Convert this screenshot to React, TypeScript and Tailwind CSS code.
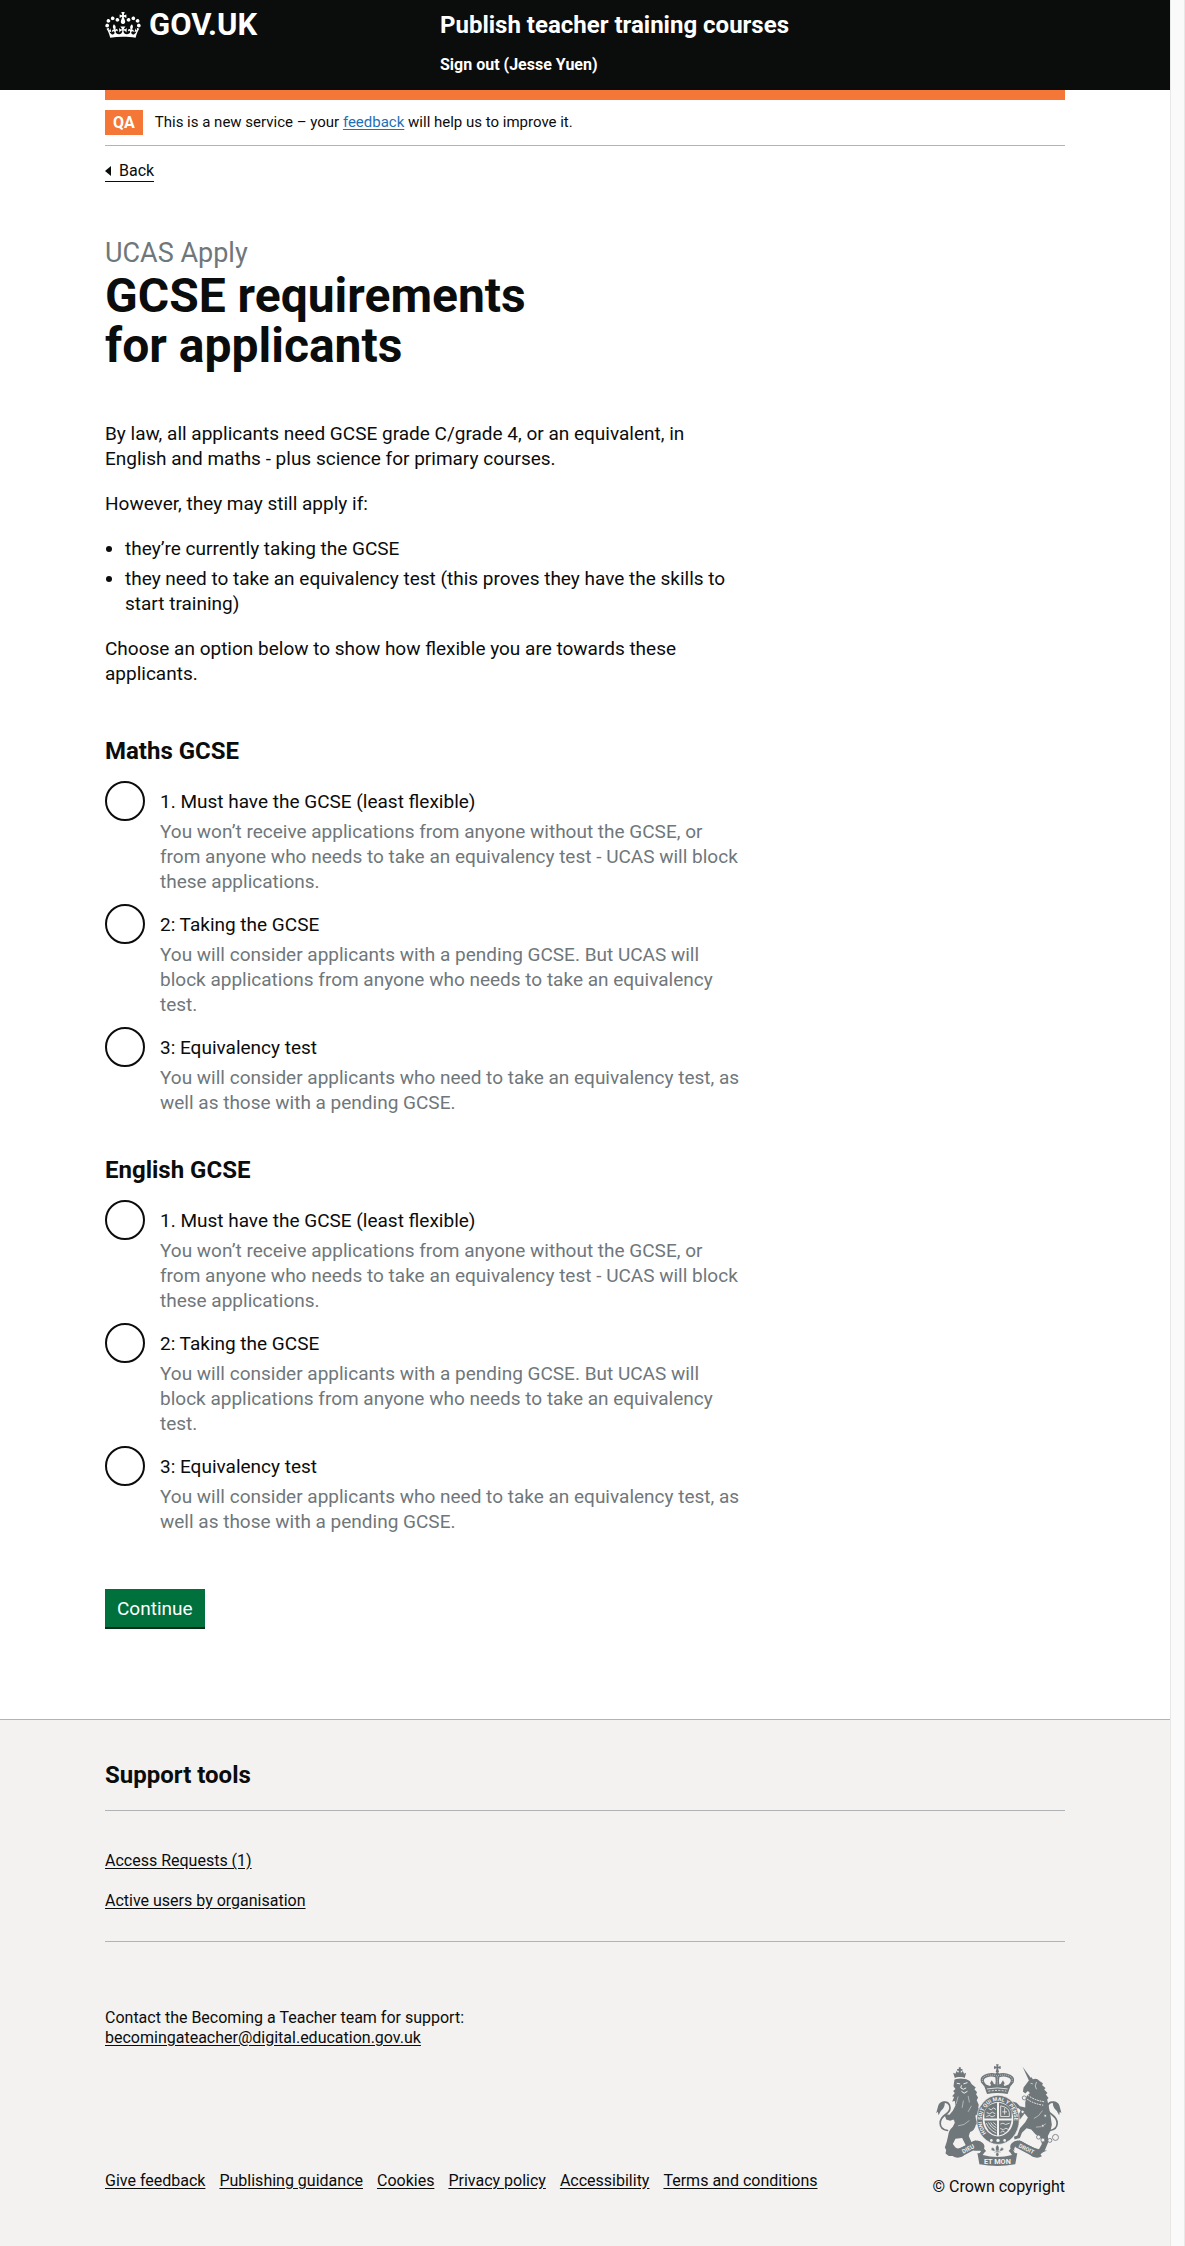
import type { ReactNode } from "react";

const options = [
  {
    value: "must-have",
    label: "1. Must have the GCSE (least flexible)",
    hint: "You won’t receive applications from anyone without the GCSE, or from anyone who needs to take an equivalency test - UCAS will block these applications.",
  },
  {
    value: "taking",
    label: "2: Taking the GCSE",
    hint: "You will consider applicants with a pending GCSE. But UCAS will block applications from anyone who needs to take an equivalency test.",
  },
  {
    value: "equivalence",
    label: "3: Equivalency test",
    hint: "You will consider applicants who need to take an equivalency test, as well as those with a pending GCSE.",
  },
];

const footerLinks = [
  "Give feedback",
  "Publishing guidance",
  "Cookies",
  "Privacy policy",
  "Accessibility",
  "Terms and conditions",
];

function Container({ children }: { children: ReactNode }) {
  return <div className="mx-auto w-full max-w-[960px]">{children}</div>;
}

function Crown() {
  return (
    <svg viewBox="0 0 132 97" className="h-[26px] w-9 shrink-0" fill="currentColor" fillRule="evenodd" aria-hidden="true">
      <path d="M25 30.2c3.5 1.5 7.7-.2 9.1-3.7 1.5-3.6-.2-7.8-3.9-9.2-3.6-1.4-7.6.3-9.1 3.9-1.4 3.5.3 7.5 3.9 9zM9 39.5c3.6 1.5 7.8-.2 9.2-3.7 1.5-3.6-.2-7.8-3.9-9.1-3.6-1.5-7.6.2-9.1 3.8-1.4 3.5.3 7.5 3.8 9zM4.4 57.2c3.5 1.5 7.7-.2 9.1-3.8 1.5-3.6-.2-7.7-3.9-9.1-3.5-1.5-7.6.3-9.1 3.8-1.4 3.5.3 7.6 3.9 9.1zm38.3-21.4c3.5 1.5 7.7-.2 9.1-3.8 1.5-3.6-.2-7.7-3.9-9.1-3.6-1.5-7.6.3-9.1 3.8-1.3 3.6.4 7.7 3.9 9.1zm64.4-5.6c-3.6 1.5-7.8-.2-9.1-3.7-1.5-3.6.2-7.8 3.8-9.2 3.6-1.4 7.7.3 9.2 3.9 1.3 3.5-.4 7.5-3.9 9zm15.9 9.3c-3.6 1.5-7.7-.2-9.1-3.7-1.5-3.6.2-7.8 3.7-9.1 3.6-1.5 7.7.2 9.2 3.8 1.5 3.5-.3 7.5-3.8 9zm4.7 17.7c-3.6 1.5-7.8-.2-9.2-3.8-1.5-3.6.2-7.7 3.9-9.1 3.6-1.5 7.7.3 9.2 3.8 1.3 3.5-.4 7.6-3.9 9.1zM89.3 35.8c-3.6 1.5-7.8-.2-9.2-3.8-1.4-3.6.2-7.7 3.9-9.1 3.6-1.5 7.7.3 9.2 3.8 1.4 3.6-.3 7.7-3.9 9.1zM69.7 17.7l8.9 4.7V9.3l-8.9 2.8c-.2-.3-.5-.6-.9-.9L72.4 0H59.6l3.5 11.2c-.3.3-.6.5-.9.9l-8.8-2.8v13.1l8.8-4.7c.3.3.6.7.9.9l-5 15.4v.1c-.2.8-.4 1.6-.4 2.4 0 4.1 3.1 7.5 7 8.1h.2c.3 0 .7.1 1 .1.4 0 .7 0 1-.1h.2c4-.6 7.1-4.1 7.1-8.1 0-.8-.1-1.7-.4-2.4V34l-5.1-15.4c.4-.2.7-.6 1-.9zM66 92.8c16.9 0 32.8 1.1 47.1 3.2 4-16.9 8.9-26.7 14-33.5l-9.6-3.4c1 4.9 1.1 7.2 0 10.2-1.5-1.4-3-4.3-4.2-8.7L108.6 76c2.8-2 5-3.2 7.5-3.3-4.4 9.4-10 11.9-13.6 11.2-4.3-.8-6.3-4.6-5.6-7.9 1-4.7 5.7-5.9 8-.5 4.3-8.7-3-11.4-7.6-8.8 7.1-7.2 7.9-13.5 2.1-21.1-8 6.1-8.1 12.3-4.5 20.8-4.7-5.4-12.1-2.5-9.5 6.2 3.4-5.2 7.9-2 7.2 3.1-.6 4.3-6.4 7.8-13.5 7.2-10.3-.9-10.9-8-11.2-13.8 2.5-.5 7.1 1.8 11 7.3L80.2 60c-4.1 4.4-8 5.3-12.3 5.4 1.4-4.4 8-11.6 8-11.6H55.5s6.4 7.2 7.9 11.6c-4.2-.1-8-1-12.3-5.4l1.4 16.4c3.9-5.5 8.5-7.7 10.9-7.3-.3 5.8-.9 12.8-11.1 13.8-7.2.6-12.9-2.9-13.5-7.2-.7-5 3.8-8.3 7.1-3.1 2.7-8.7-4.6-11.6-9.4-6.2 3.7-8.5 3.6-14.7-4.6-20.8-5.8 7.6-5 13.9 2.2 21.1-4.7-2.6-11.9.1-7.7 8.8 2.3-5.5 7.1-4.2 8.1.5.7 3.3-1.3 7.1-5.7 7.9-3.5.7-9-1.8-13.5-11.2 2.5.1 4.7 1.3 7.5 3.3l-4.7-15.4c-1.2 4.4-2.7 7.2-4.3 8.7-1.1-3-.9-5.3 0-10.2l-9.5 3.4c5 6.9 9.9 16.7 14 33.5 14.8-2.1 30.8-3.2 47.7-3.2z" />
    </svg>
  );
}

function RoyalArms() {
  const ink = "#6f777b";
  const paper = "#f3f2f1";
  return (
    <svg viewBox="50 40 378 310" className="h-[103px] w-[126px]" fill={ink} aria-hidden="true">
      <defs>
        <path id="garter" d="M201 248A49 57 0 1 1 271 248" />
      </defs>

      {/* tails */}
      <g fill="none" stroke={ink} strokeWidth="5" strokeLinecap="round">
        <path d="M84 240q-22-4-22-22 0-14 16-26 18-12 12-28-6-12-18-8-8 4-12 16" />
        <path d="M392 240q22-4 22-22 0-14-16-26-18-12-12-28 6-12 18-8 8 4 12 16" />
      </g>
      <path d="M76 152q-16 0-20 14l-6 22 5-4 2 10q4-12 14-20 6-8 5-22zM401 152q16 0 20 14l6 22-5-4-2 10q-4-12-14-20-6-8-5-22z" />

      {/* lion */}
      <path d="M106 82l-5-16 7 3 3-8 5 5 4-6 5 6 5-5 4 8 6-3-4 16q-15-5-30 0z" />
      <path d="M118 50h6v5h5v5h-5v4h-6v-4h-5v-5h5z" />
      <path d="M105 87q17-6 36-1l10 5 6 10 12 10-4 5 8 9-3 6 6 10-4 8 6 14-2 12 10-10 2 14-12 12-8 4 2 14 14 6 4 8-6 2-12-4-2 6q-4 14-16 18l-4 12 8 18 12 8 14 2 8 8-2 8h-22q-18-2-26-14l-12-24-20 2-8 16 8 10 12 6 4 12-14 8h-22l-10-8 2-10-4-8 6-18 4-18q2-16 14-26l6-12-4-10-10 4-12-4-4-12 4-4 10 2 10-12 8-16-2-14-8 2 6-14-6-2 8-10-5-6 7-6-6-8z" />
      <g stroke={paper} strokeWidth="3" fill="none">
        <path d="M108 83q15-5 28 0" strokeWidth="2" />
        <path d="M112 98l10 2M132 100l12-4M126 104l-2 8 8 4 8-4M126 122l8 6 10-6" />
        <path d="M116 138l-6 22M132 150l-4 22M146 136l4 20M156 166l-10 18M104 210l-10 24M150 210q-16 16-34 16" strokeWidth="1.5" />
      </g>

      {/* unicorn */}
      <path d="M310 48l27 37-8 5z" />
      <path d="M330 88l6-9 5 7q12-4 20 5l10 7-2 6 10 8-4 5 10 10-5 5 8 10-4 5 4 18 6 30 4 28-4 18-8 16 2 16-10 24-4 8-14 2-2-8 10-18-4-18-16-12-12-14-14-4-14 14-6 16-16 4-2-8 10-4 8-22 16-18 8-14-10-12-14 18-10-4-4-12 12-2 4-10-6-6-14 2-6-10 2-12 12 4 10 10 16 4v-16l4-18 10-10-6-6-8 8-7-6 2-12z" />
      <g fill="none" stroke={paper} strokeWidth="2">
        <path d="M334 98l7 2M352 94l-4 12 4 10" />
        <path d="M326 134q20 16 52 20M324 146q20 14 48 18" strokeDasharray="5 3" strokeWidth="3" />
        <path d="M370 180q-10 18-26 24M380 220q-12 12-30 10" strokeWidth="1.5" />
      </g>
      <g fill={paper} stroke={ink} strokeWidth="2.5">
        <circle cx="315" cy="142" r="6" />
        <circle cx="310" cy="184" r="5" />
        <circle cx="378" cy="196" r="4" />
        <circle cx="371" cy="226" r="4" />
        <circle cx="358" cy="260" r="6" />
        <circle cx="371" cy="269" r="6" />
        <circle cx="392" cy="270" r="6" />
        <circle cx="409" cy="261" r="9" />
      </g>

      {/* crown */}
      <path d="M230 41h8l-2 7 8-2v9l-8-2 3 11h-10l3-11-8 2v-9l8 2z" />
      <circle cx="234" cy="69" r="5" />
      <path d="M203 130l-8-22-10-12q-6-16 10-24 18-8 39-2 21-6 39 2 16 8 10 24l-10 12-8 22q-31-6-62 0z" />
      <path d="M200 102q-12-14-2-20 14-8 30-2 2 10 0 22l-8-4-8 8zM268 102q12-14 2-20-14-8-30-2-2 10 0 22l8-4 8 8z" fill={paper} />
      <path d="M212 98l5-9 6 9-6 8zM256 98l-5-9-6 9 6 8z" />
      <g fill="none" stroke={paper} strokeWidth="2.5">
        <path d="M190 94q-4-12 8-18 18-6 36 0 18-6 36 0 12 6 8 18M234 78v26" strokeDasharray="3 3" strokeWidth="2" />
        <path d="M203 115q31-6 62 0" />
        <path d="M207 122q28-5 54 0" strokeDasharray="6 4" />
      </g>

      {/* garter and shield */}
      <ellipse cx="236" cy="208" rx="64" ry="74" stroke={paper} strokeWidth="2" />
      <ellipse cx="236" cy="206" rx="46" ry="52" fill={paper} />
      <text fill={paper} fontFamily="Roboto, sans-serif" fontWeight="700" fontSize="16">
        <textPath href="#garter">HONI SOIT QUI MAL Y PENSE</textPath>
      </text>
      <g fill={paper}>
        <circle cx="216" cy="270" r="4" />
        <circle cx="236" cy="270" r="5" />
        <circle cx="256" cy="270" r="4" />
      </g>
      <path d="M195 204v-20q10-24 38-27v47zM239 157q28 3 38 27v20h-38zM195 210h38v45q-32-6-38-45zM239 210h38q-6 39-38 45z" />
      <g fill="none" stroke={paper} strokeWidth="2.5">
        <path d="M208 174l8 4 6-6 8 5M202 186l9 4 8-5 9 5M201 198l9-3 8 4 9-4" />
        <path d="M244 246l6-4 6 3M243 234l9 4 8-5 7 4M243 221l8-3 8 4 12-4" />
        <path d="M244 166q24 4 26 20v12h-26zM256 173v19M249 184h14" />
        <path d="M201 218q8 20 30 30M207 216q8 16 24 24M214 216q4 10 17 16M222 216l9 8" />
      </g>

      {/* motto ribbon */}
      <path d="M84 301q38-2 78-29 18-6 28 6 8 8 4 16l-12 8q4-10-4-14-6-2-12 2-20 12-36 28-16 8-30 0l4-6q-8-10-20-11z" />
      <path d="M384 301q-38-2-78-29-18-6-28 6-8 8-4 16l12 8q-4-10 4-14 6-2 12 2 20 12 36 28 16 8 30 0l-4-6q8-10 20-11z" />
      <path d="M118 309l56-29M294 280l56 29" stroke={ink} strokeWidth="24" />
      <path d="M174 308q8 2 12-8l6-8 8 10q-6 4-10 12 44 12 88 0-4-8-10-12l8-10 6 8q4 10 12 8l-6 34q-54 10-108 0z" />
      <g stroke={paper} strokeWidth="1.5">
        <path d="M234 282q8 8 5 16l-2 12h-6l-2-12q-3-8 5-16z" />
        <path d="M228 302q-4-14-11-10-5 6 3 9l8 3zM240 302q4-14 11-10 5 6-3 9l-8 3zM224 302h20v4h-20z" />
        <path d="M231 306h6l2 8-5 6-5-6z" />
      </g>
      <g fill={paper} fontFamily="Roboto, sans-serif" fontWeight="700" textAnchor="middle">
        <text x="149" y="301" fontSize="18" transform="rotate(-27 149 301)">
          DIEU
        </text>
        <text x="234" y="341" fontSize="22">
          ET MON
        </text>
        <text x="319" y="301" fontSize="17" transform="rotate(27 319 301)">
          DROIT
        </text>
      </g>
    </svg>
  );
}

function RadioGroup({ name, legend }: { name: string; legend: string }) {
  return (
    <fieldset>
      <legend className="mb-[15px] text-2xl leading-[30px] font-bold">{legend}</legend>
      <div className="flex flex-col gap-[10px]">
        {options.map((option) => {
          const id = `${name}-${option.value}`;
          return (
            <div key={id} className="flex gap-[15px]">
              <input
                id={id}
                type="radio"
                name={name}
                value={option.value}
                aria-describedby={`${id}-hint`}
                className="size-10 shrink-0 appearance-none rounded-full border-2 border-[#0b0c0c] bg-white checked:bg-[#0b0c0c] checked:shadow-[inset_0_0_0_8px_#ffffff]"
              />
              <div className="min-w-0 flex-1 pt-2">
                <label htmlFor={id} className="mb-[5px] block">
                  {option.label}
                </label>
                <p id={`${id}-hint`} className="text-[#6f777b]">
                  {option.hint}
                </p>
              </div>
            </div>
          );
        })}
      </div>
    </fieldset>
  );
}

export default function App() {
  return (
    <div className="flex min-h-screen bg-white font-[Roboto,sans-serif] text-[19px] leading-[25px] text-[#0b0c0c]">
      <div className="flex min-w-0 flex-1 flex-col">
        <header className="bg-[#0b0c0c] text-white">
          <Container>
            <div className="flex h-[90px] items-start">
              <a href="#" className="flex w-[335px] items-center gap-2 pt-[9px]">
                <Crown />
                <span className="text-[31px] leading-[31px] font-bold">GOV.UK</span>
              </a>
              <div className="pt-[10px]">
                <a href="#" className="block text-2xl leading-[30px] font-bold">
                  Publish teacher training courses
                </a>
                <nav className="mt-[15px] text-base leading-5 font-bold">
                  <a href="#">Sign out (Jesse Yuen)</a>
                </nav>
              </div>
            </div>
          </Container>
        </header>

        <Container>
          <div className="h-[10px] bg-[#f47738]" />
          <div className="flex items-center gap-3 border-b border-[#b1b4b6] py-[10px] text-[15px] leading-[25px]">
            <strong className="bg-[#f47738] px-2 text-base leading-[25px] text-white">QA</strong>
            <p>
              This is a new service – your{" "}
              <a href="#" className="text-[#1d70b8] underline underline-offset-2">
                feedback
              </a>{" "}
              will help us to improve it.
            </p>
          </div>
          <a
            href="#"
            className="mt-[15px] inline-flex items-center gap-2 border-b border-[#0b0c0c] text-base leading-5"
          >
            <svg viewBox="0 0 6 10" className="h-[10px] w-[6px]" fill="currentColor" aria-hidden="true">
              <path d="M6 0v10L0 5z" />
            </svg>
            Back
          </a>

          <main className="max-w-[635px] pt-[54px] pb-[92px]">
            <h1 className="text-5xl leading-[50px] font-bold">
              <span className="block text-[27px] leading-[35px] font-normal text-[#6f777b]">UCAS Apply</span>
              GCSE requirements
              <br />
              for applicants
            </h1>
            <div className="mt-[50px] flex flex-col gap-5">
              <p>
                By law, all applicants need GCSE grade C/grade 4, or an equivalent, in English and maths - plus science
                for primary courses.
              </p>
              <p>However, they may still apply if:</p>
              <ul className="flex list-disc flex-col gap-[5px] pl-5">
                <li>they’re currently taking the GCSE</li>
                <li>they need to take an equivalency test (this proves they have the skills to start training)</li>
              </ul>
              <p>Choose an option below to show how flexible you are towards these applicants.</p>
            </div>
            <form className="mt-[50px]" onSubmit={(event) => event.preventDefault()}>
              <div className="flex flex-col gap-10">
                <RadioGroup name="maths" legend="Maths GCSE" />
                <RadioGroup name="english" legend="English GCSE" />
              </div>
              <button
                type="submit"
                className="mt-[55px] bg-[#00703c] px-3 pt-[7px] pb-[6px] text-white shadow-[0_2px_0_#002d18]"
              >
                Continue
              </button>
            </form>
          </main>
        </Container>

        <footer className="flex-1 border-t border-[#b1b4b6] bg-[#f3f2f1] pt-10 pb-12 text-base leading-5">
          <Container>
            <h2 className="text-2xl leading-[30px] font-bold">Support tools</h2>
            <ul className="mt-5 flex flex-col gap-5 border-y border-[#b1b4b6] pt-10 pb-[30px]">
              <li>
                <a href="#" className="underline underline-offset-2">
                  Access Requests (1)
                </a>
              </li>
              <li>
                <a href="#" className="underline underline-offset-2">
                  Active users by organisation
                </a>
              </li>
            </ul>
            <p className="mt-[66px]">
              Contact the Becoming a Teacher team for support:
              <br />
              <a href="mailto:becomingateacher@digital.education.gov.uk" className="underline underline-offset-2">
                becomingateacher@digital.education.gov.uk
              </a>
            </p>
            <div className="mt-4 flex items-end justify-between">
              <ul className="mb-[6px] flex gap-[14px]">
                {footerLinks.map((link) => (
                  <li key={link}>
                    <a href="#" className="underline underline-offset-2">
                      {link}
                    </a>
                  </li>
                ))}
              </ul>
              <a href="#" className="flex flex-col items-center gap-[10px]">
                <RoyalArms />
                © Crown copyright
              </a>
            </div>
          </Container>
        </footer>
      </div>
      <div className="w-[15px] shrink-0 border-x border-[#e8e8e8] bg-[#fafafa]" aria-hidden="true" />
    </div>
  );
}
